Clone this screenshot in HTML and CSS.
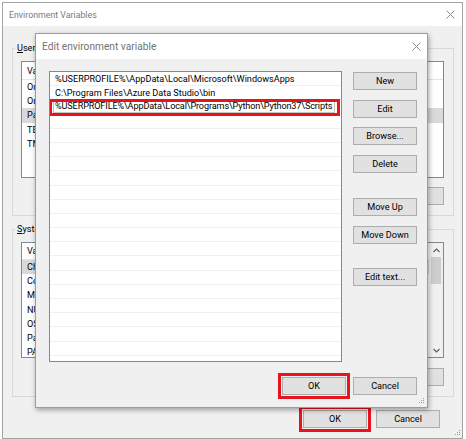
FILE: index.html
```html
<!DOCTYPE html>
<html>
<head>
<meta charset="utf-8">
<title>Environment Variables</title>
<link rel="stylesheet" href="styles.css">
</head>
<body>
<div class="window outer">
  <div class="titlebar outer-title">
    <span class="title">Environment Variables</span>
    <svg class="close" width="9" height="9" viewBox="0 0 9 9"><path d="M0.5 0.5L8.5 8.5M8.5 0.5L0.5 8.5"/></svg>
  </div>
  <div class="outer-body">
    <fieldset class="group group-user">
      <legend><u>U</u>ser variables for user</legend>
      <div class="list list-user">
        <div class="lhead"><span class="c1">Variable</span><span>Value</span></div>
        <div class="lrow"><span class="c1">OneDrive</span></div>
        <div class="lrow"><span class="c1">OneDriveConsumer</span></div>
        <div class="lrow sel"><span class="c1">Path</span></div>
        <div class="lrow"><span class="c1">TEMP</span></div>
        <div class="lrow"><span class="c1">TMP</span></div>
      </div>
      <div class="btnrow">
        <button class="btn">New...</button>
        <button class="btn">Edit...</button>
        <button class="btn">Delete</button>
      </div>
    </fieldset>
    <fieldset class="group group-system">
      <legend><u>S</u>ystem variables</legend>
      <div class="list list-system">
        <div class="list-main">
          <div class="lhead"><span class="c1">Variable</span><span>Value</span></div>
          <div class="lrow sel"><span class="c1">ChocolateyInstall</span></div>
          <div class="lrow"><span class="c1">ComSpec</span></div>
          <div class="lrow"><span class="c1">MOZ_PLUGIN_PATH</span></div>
          <div class="lrow"><span class="c1">NUMBER_OF_PROCESSORS</span></div>
          <div class="lrow"><span class="c1">OS</span></div>
          <div class="lrow"><span class="c1">Path</span></div>
          <div class="lrow"><span class="c1">PATHEXT</span></div>
        </div>
        <div class="vscroll">
          <div class="arrow"><svg width="7" height="5" viewBox="0 0 7 5"><path d="M0.5 4L3.5 1L6.5 4"/></svg></div>
          <div class="track"><div class="thumb"></div></div>
          <div class="arrow"><svg width="7" height="5" viewBox="0 0 7 5"><path d="M0.5 1L3.5 4L6.5 1"/></svg></div>
        </div>
      </div>
      <div class="btnrow btnrow-sys">
        <button class="btn">New...</button>
        <button class="btn">Edit...</button>
        <button class="btn">Delete</button>
      </div>
    </fieldset>
    <div class="footer outer-footer">
      <button class="btn btn-default marked">OK</button>
      <button class="btn">Cancel</button>
    </div>
  </div>
  <svg class="grip grip-outer" width="7" height="7" viewBox="0 0 7 7"><rect x="5" y="0" width="1" height="1"/><rect x="3" y="2" width="1" height="1"/><rect x="5" y="2" width="1" height="1"/><rect x="1" y="4" width="1" height="1"/><rect x="3" y="4" width="1" height="1"/><rect x="5" y="4" width="1" height="1"/></svg>
</div>

<div class="window dialog">
  <div class="titlebar dialog-title">
    <span class="title">Edit environment variable</span>
    <svg class="close" width="9" height="9" viewBox="0 0 9 9"><path d="M0.5 0.5L8.5 8.5M8.5 0.5L0.5 8.5"/></svg>
  </div>
  <div class="dialog-body">
    <div class="elist">
      <div class="erow">%USERPROFILE%\AppData\Local\Microsoft\WindowsApps</div>
      <div class="erow">C:\Program Files\Azure Data Studio\bin</div>
      <div class="erow esel"><span class="edit">%USERPROFILE%\AppData\Local\Programs\Python\Python37\Scripts</span></div>
      <div class="erow"></div><div class="erow"></div><div class="erow"></div><div class="erow"></div>
      <div class="erow"></div><div class="erow"></div><div class="erow"></div><div class="erow"></div>
      <div class="erow"></div><div class="erow"></div><div class="erow"></div><div class="erow"></div>
      <div class="erow"></div><div class="erow"></div><div class="erow"></div><div class="erow"></div>
      <div class="erow"></div><div class="erow"></div>
    </div>
    <div class="ebuttons">
      <button class="btn">New</button>
      <button class="btn">Edit</button>
      <button class="btn">Browse...</button>
      <button class="btn">Delete</button>
      <button class="btn gap-before">Move Up</button>
      <button class="btn">Move Down</button>
      <button class="btn gap-before2">Edit text...</button>
    </div>
  </div>
  <div class="footer dialog-footer">
    <button class="btn btn-default marked">OK</button>
    <button class="btn">Cancel</button>
  </div>
  <svg class="grip grip-dialog" width="7" height="7" viewBox="0 0 7 7"><rect x="5" y="0" width="1" height="1"/><rect x="3" y="2" width="1" height="1"/><rect x="5" y="2" width="1" height="1"/><rect x="1" y="4" width="1" height="1"/><rect x="3" y="4" width="1" height="1"/><rect x="5" y="4" width="1" height="1"/></svg>
</div>
</body>
</html>
```

FILE: styles.css
```css
* { box-sizing: border-box; }

html, body {
  margin: 0;
  padding: 0;
}

body {
  width: 466px;
  height: 439px;
  overflow: hidden;
  position: relative;
  background: #ffffff;
  font-family: Roboto, "Noto Sans", sans-serif;
  font-size: 9.1px;
  color: #000;
}

.window {
  background: #f0f0f0;
}

.outer {
  margin: 2px 0 0 2px;
  width: 461px;
  height: 437px;
  border: 1px solid #a3a3a3;
  display: flex;
  flex-direction: column;
  position: relative;
}

.titlebar {
  background: #ffffff;
  display: flex;
  align-items: center;
  justify-content: space-between;
  flex: none;
}

.title {
  color: #7b7b7b;
}

.outer-title .title {
  font-size: 8.8px;
}

.dialog-title .title {
  font-size: 10.2px;
  color: #737373;
}

.close path {
  stroke: #8a8a8a;
  stroke-width: 1;
  fill: none;
}

.outer-title {
  height: 23px;
  padding: 0 7px 0 6px;
}

.outer-body {
  flex: 1;
  padding: 16px 0 0 9px;
}

.group {
  margin: 0;
  width: 442px;
  min-width: 0;
  border: 1px solid #d9d9d9;
  padding: 7px 9px 10px 8px;
}

.group legend {
  padding: 0 2px;
  margin-left: -6px;
  line-height: 12px;
  height: 12px;
  color: #000;
}

.group u {
  text-decoration: underline;
  text-underline-offset: 1px;
}

.group-system {
  margin-top: 7px;
}

.list {
  background: #fff;
  border: 1px solid #828790;
  overflow: hidden;
  color: #000;
}

.list-user {
  height: 117px;
}

.list-system {
  height: 116px;
  display: flex;
}

.list-main {
  flex: 1;
  overflow: hidden;
}

.lhead {
  height: 18px;
  display: flex;
  align-items: center;
  padding-left: 5px;
  border-bottom: 1px solid #e5e5e5;
  color: #000;
}

.list-system .lhead {
  height: 17px;
}

.lrow {
  height: 14.2px;
  display: flex;
  align-items: center;
  padding-left: 5px;
  color: #000;
}

.c1 {
  width: 130px;
  white-space: nowrap;
  color: #000;
}

.lrow.sel {
  background: #d9d9d9;
}

.vscroll {
  width: 14px;
  flex: none;
  background: #f0f0f0;
  display: flex;
  flex-direction: column;
}

.arrow {
  height: 14px;
  display: flex;
  align-items: center;
  justify-content: center;
}

.arrow path {
  stroke: #606060;
  stroke-width: 1.2;
  fill: none;
}

.track {
  flex: 1;
}

.thumb {
  height: 27px;
  margin: 0 2px;
  background: #cdcdcd;
}

.btnrow {
  display: flex;
  justify-content: flex-end;
  gap: 8px;
  margin-top: 9px;
}

.btnrow-sys {
  margin-top: 10px;
}

.btn {
  width: 64px;
  height: 18px;
  padding: 0;
  margin: 0;
  background: #e1e1e1;
  border: 1px solid #adadad;
  border-radius: 0;
  font-family: inherit;
  font-size: 9.1px;
  color: #000;
  line-height: 16px;
  text-align: center;
}

.marked {
  outline: 3px solid #e8141c;
  outline-offset: 1px;
}

.footer {
  display: flex;
  justify-content: flex-end;
}

.outer-footer {
  margin-top: 13px;
  padding-right: 22px;
  gap: 9px;
}

.grip {
  position: absolute;
  right: 1px;
  bottom: 1px;
}

.grip rect {
  fill: #9a9a9a;
}

/* Edit environment variable dialog */
.dialog {
  position: absolute;
  left: 35px;
  top: 33px;
  width: 393px;
  height: 375px;
  border: 1px solid #9c9c9c;
  box-shadow: 1px 2px 5px rgba(0, 0, 0, 0.35);
  display: flex;
  flex-direction: column;
}

.dialog-title {
  height: 25px;
  padding: 0 6px 0 6px;
}

.dialog-body {
  display: grid;
  grid-template-columns: 293px 64px;
  column-gap: 11px;
  padding: 12px 0 0 13px;
}

.elist {
  height: 291px;
  background: #fff;
  border: 1px solid #828790;
  overflow: hidden;
}

.erow {
  height: 14.2px;
  border-bottom: 1px solid #f0f0f0;
  padding-left: 5px;
  display: flex;
  align-items: center;
  white-space: nowrap;
  color: #000;
}

.esel {
  margin-right: 2px;
  outline: 3px solid #e8141c;
  outline-offset: -2px;
  padding-left: 3px;
}

.edit {
  border: 1px solid #c4c4c4;
  padding: 0 2px 0 1px;
  line-height: 11px;
  letter-spacing: -0.12px;
}

.ebuttons {
  display: flex;
  flex-direction: column;
  gap: 9.7px;
  padding-top: 1px;
}

.ebuttons .gap-before {
  margin-top: 15.3px;
}

.ebuttons .gap-before2 {
  margin-top: 14.3px;
}

.dialog-footer {
  padding: 15px 10px 0 0;
  gap: 7px;
}

.grip-dialog {
  right: 2px;
  bottom: 2px;
}
```
